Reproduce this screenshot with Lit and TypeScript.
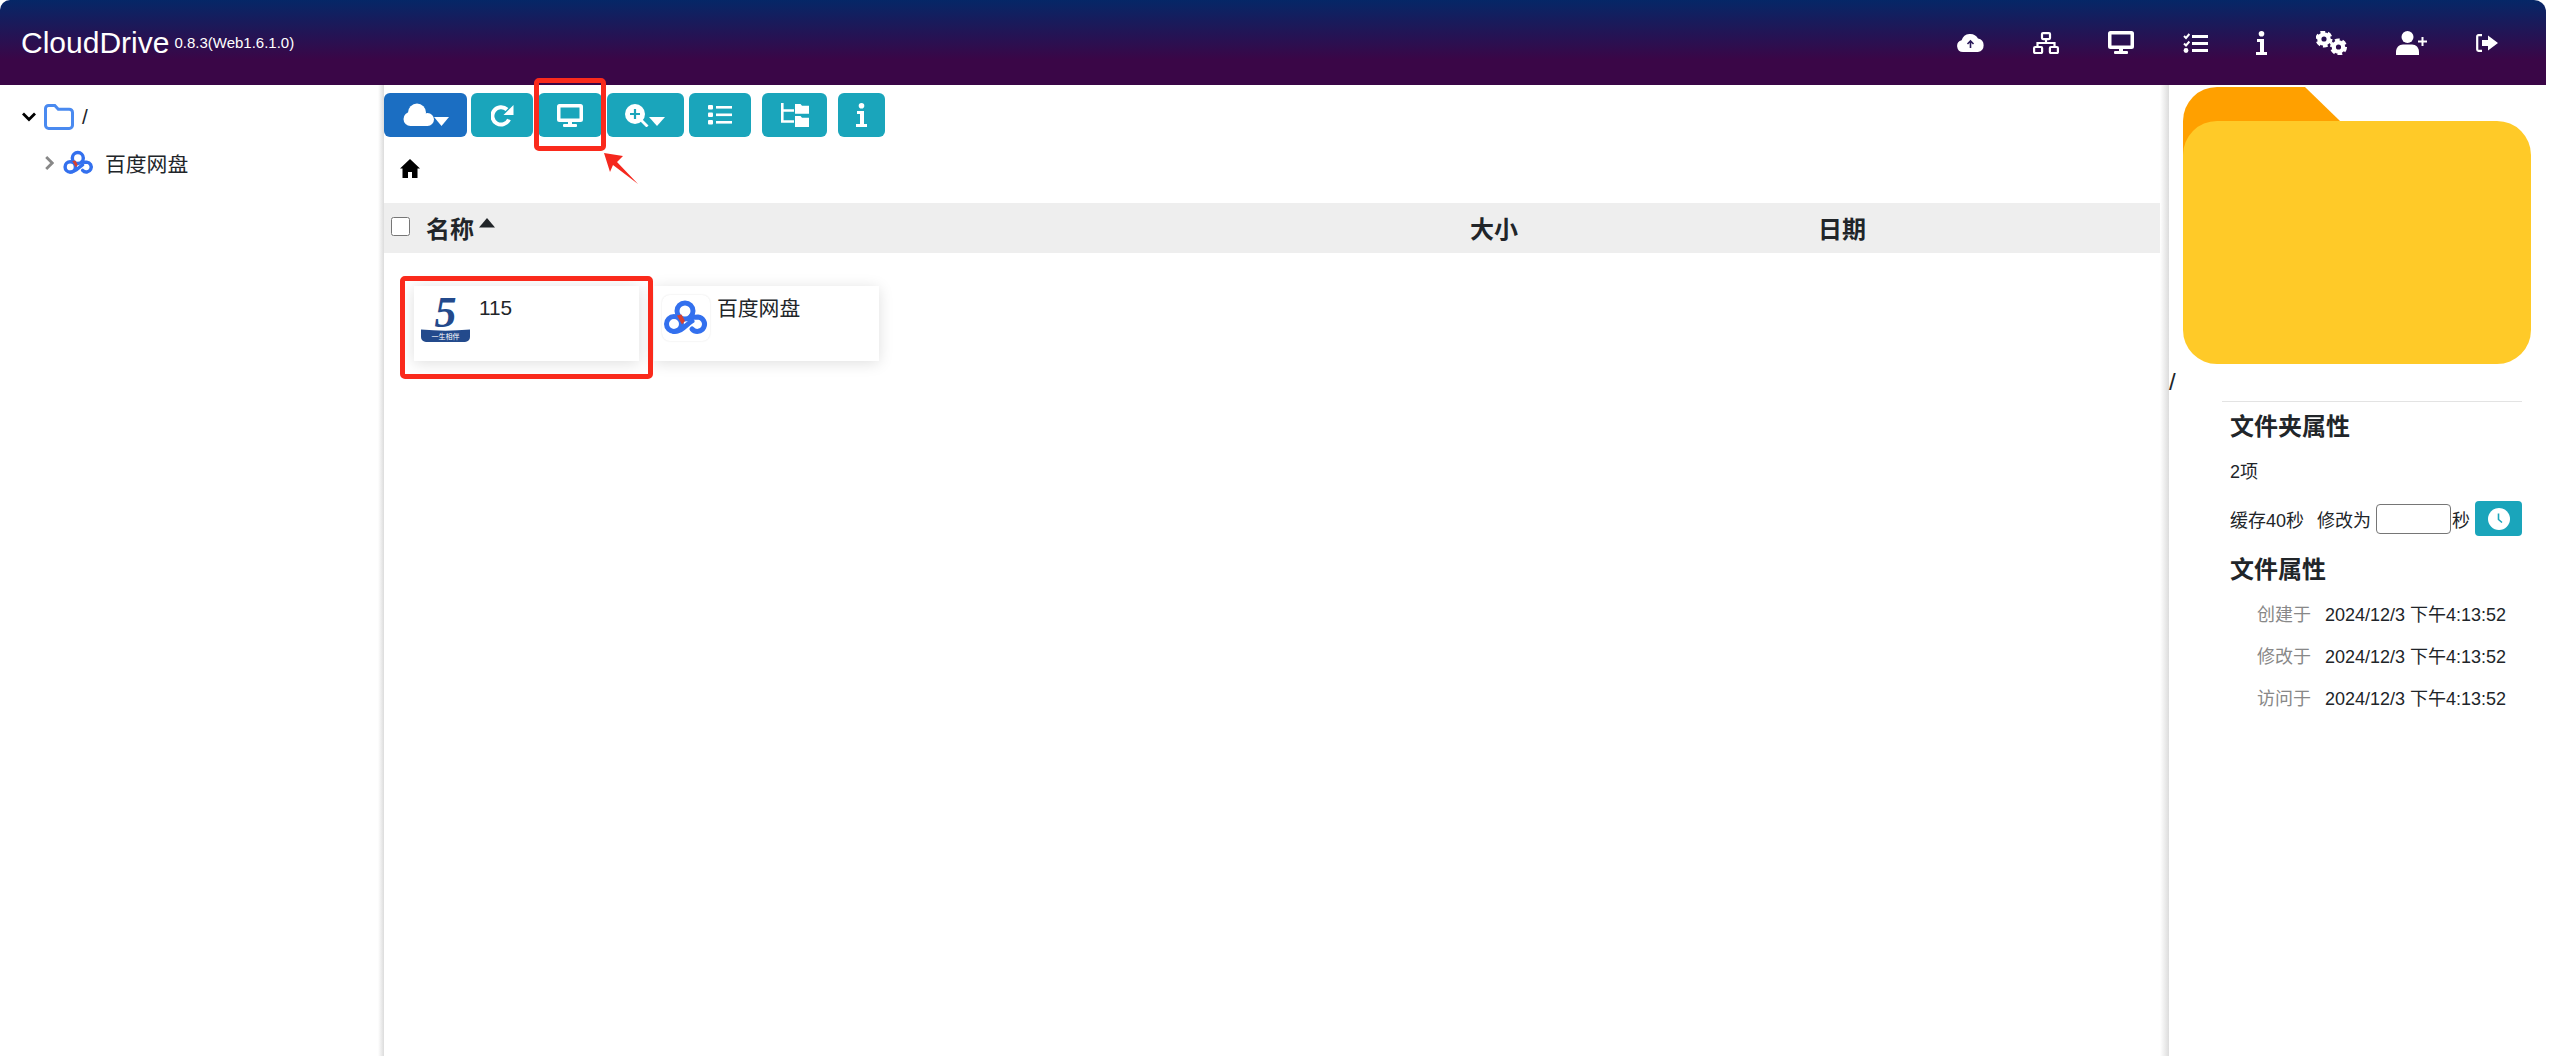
import { LitElement, html, css, svg } from "lit";
import { customElement } from "lit/decorators.js";

const W = "#fff";

const gear = (cx: number, cy: number, r: number) => svg`
  <circle cx=${cx} cy=${cy} r=${r * 0.62} fill="none" stroke=${W} stroke-width=${r * 0.56}/>
  <circle cx=${cx} cy=${cy} r=${r * 0.94} fill="none" stroke=${W} stroke-width=${r * 0.36} stroke-dasharray=${`${r * 0.62} ${r * 0.364}`}/>`;

const ic = {
  cloudUp: html`<svg width="27" height="19" viewBox="0 0 27 19"><path fill=${W} d="M6 19A6 6 0 0 1 4.6 7.2 9 9 0 0 1 21 5.6 6.8 6.8 0 0 1 21 19z"/><path fill="none" stroke="#2a1a5a" stroke-width="1.6" d="M13.5 15V8M10.5 11l3-3 3 3"/></svg>`,
  network: html`<svg width="26" height="22" viewBox="0 0 26 22" fill="none" stroke=${W} stroke-width="2.2"><rect x="9" y="1.100" width="8" height="6" rx="1"/><path d="M13 7v4M4.500 15v-4h17v4"/><rect x="1.100" y="15" width="8" height="6" rx="1"/><rect x="16.900" y="15" width="8" height="6" rx="1"/></svg>`,
  monitor: html`<svg width="26" height="23" viewBox="0 0 26 23"><path fill=${W} fill-rule="evenodd" d="M2.500 0h21a2.500 2.500 0 0 1 2.500 2.500v13a2.500 2.500 0 0 1-2.500 2.500h-21a2.500 2.500 0 0 1-2.500-2.500v-13a2.500 2.500 0 0 1 2.500-2.500zm1 3.500v11h19v-11z"/><rect x="11" y="18" width="4" height="3" fill=${W}/><rect x="6" y="20" width="14" height="3" rx="1" fill=${W}/></svg>`,
  tasks: html`<svg width="25" height="20" viewBox="0 0 25 20" fill="none" stroke=${W}><path stroke-width="2" d="M1 3l2 2 3.400-4M1 10.500l2 2 3.400-4"/><circle cx="3" cy="17.500" r="2.400" fill=${W} stroke="none"/><path stroke-width="3" d="M9 3.500h16M9 10.500h16M9 17.500h16"/></svg>`,
  info: html`<svg width="11" height="24" viewBox="0 0 11 24"><circle cx="5.500" cy="2.800" r="2.800" fill=${W}/><path fill=${W} d="M1 8h7v13h3v3H0v-3h4V11H1z"/></svg>`,
  cogs: html`<svg width="31" height="24" viewBox="0 0 31 24">${gear(8, 8, 7.6)}${gear(22.5, 16, 7.6)}</svg>`,
  userPlus: html`<svg width="31" height="24" viewBox="0 0 31 24"><circle cx="11.500" cy="6" r="6" fill=${W}/><path fill=${W} d="M0 24v-3c0-4.500 3-7.500 7-7.500h9c4 0 7 3 7 7.500v3z"/><path stroke=${W} stroke-width="2" d="M22 10.500h9M26.500 6v9"/></svg>`,
  signOut: html`<svg width="22" height="18" viewBox="0 0 22 18"><path fill="none" stroke=${W} stroke-width="2.200" d="M6 1.200H2.500A1.300 1.300 0 0 0 1.200 2.500v13a1.300 1.300 0 0 0 1.300 1.300H6"/><path fill=${W} d="M6 6h6V1.500L22 9l-10 7.500V12H6z"/></svg>`,
  cloudDown: html`<svg width="46" height="24" viewBox="0 0 46 24"><g fill=${W}><circle cx="7.500" cy="16" r="7"/><circle cx="14" cy="9.500" r="9"/><circle cx="24.500" cy="16.500" r="6.500"/><rect x="7" y="14" width="18" height="9"/></g><path fill=${W} d="M31 14h15l-7.500 9z"/></svg>`,
  refresh: html`<svg width="23" height="23" viewBox="0 0 23 23"><path fill="none" stroke=${W} stroke-width="4" d="M18 15.500A8.700 8.700 0 1 1 16 5.500"/><path fill=${W} d="M22.500 1v10h-10z"/></svg>`,
  zoom: html`<svg width="41" height="23" viewBox="0 0 41 23"><circle cx="10" cy="10" r="10" fill=${W}/><path stroke="#1aa5bb" stroke-width="2.200" d="M10 5v10M5 10h10"/><path stroke=${W} stroke-width="2.800" d="M16 16l6.500 6.500"/><path fill=${W} d="M24 13h16l-8 9z"/></svg>`,
  list: html`<svg width="24" height="20" viewBox="0 0 24 20"><g fill=${W}><rect x="0" y="0" width="5" height="4.500" rx="1"/><rect x="0" y="7.500" width="5" height="4.500" rx="1"/><rect x="0" y="15" width="5" height="4.500" rx="1"/><rect x="8" y="1" width="16" height="2.600"/><rect x="8" y="8.500" width="16" height="2.600"/><rect x="8" y="16" width="16" height="2.600"/></g></svg>`,
  tree: html`<svg width="28" height="24" viewBox="0 0 28 24"><path fill="none" stroke=${W} stroke-width="2.600" d="M1.300 0v18.500H13M1.300 7.500H13"/><path fill=${W} d="M14 1h5.500l1.500 1.800h7v8H14zM14 13h5.500l1.500 1.800h7V24H14z"/></svg>`,
  home: html`<svg width="20" height="19" viewBox="0 0 20 19"><path d="M10 0L0 9.500h2.500V19h5.500v-6h4v6h5.500V9.500H20z"/></svg>`,
  clock: html`<svg width="22" height="22" viewBox="0 0 22 22"><circle cx="11" cy="11" r="11" fill=${W}/><path fill="none" stroke="#1aa5bb" stroke-width="1.600" d="M10.500 5.500v6l3.500 3"/></svg>`,
};

const baidu = (size: number) => html`<svg width=${size} height=${size * 46 / 48} viewBox="3 3 48 46">
  <g fill="none" stroke="#3370ee" stroke-width="5" stroke-linecap="round">
    <circle cx="26" cy="19" r="8"/>
    <circle cx="15" cy="32" r="7.500"/>
    <path d="M32 24.500c2 1 4 .8 7 .5a7.200 7.200 0 1 1-6 12"/>
    <path d="M15 39.500c8 0 11-6 18-10.500"/>
  </g>
  <path fill="#d8402f" d="M18 23.500l4.500-1 3.500 6.500-3 3.500z"/>
</svg>`;

const logo115 = html`<svg class="logo" width="49" height="45" viewBox="0 0 49 45">
  <text class="five" x="24.500" y="30" text-anchor="middle">5</text>
  <path fill="#234a8c" d="M0 32.500c16 1.500 33 1.500 49 0V40a5 5 0 0 1-5 5H5a5 5 0 0 1-5-5z"/>
  <text class="motto" x="24.500" y="42" text-anchor="middle">一生相伴</text>
</svg>`;

const navItems = [
  { w: 76, i: ic.cloudUp },
  { w: 76, i: ic.network },
  { w: 74, i: ic.monitor },
  { w: 74, i: ic.tasks },
  { w: 58, i: ic.info },
  { w: 82, i: ic.cogs },
  { w: 78, i: ic.userPlus },
  { w: 74, i: ic.signOut },
];

const toolButtons = [
  { w: 83, m: 0, i: ic.cloudDown, primary: true },
  { w: 62, m: 4, i: ic.refresh },
  { w: 64, m: 5, i: ic.monitor },
  { w: 77, m: 5, i: ic.zoom },
  { w: 62, m: 5, i: ic.list },
  { w: 65, m: 11, i: ic.tree },
  { w: 47, m: 11, i: ic.info },
];

const dates = ["创建于", "修改于", "访问于"];

@customElement("app-root")
export class AppRoot extends LitElement {
  static styles = css`
    :host {
      display: block;
      width: 2550px;
      height: 1056px;
      overflow: hidden;
      background: #fff;
      color: #212529;
      font-family: "Liberation Sans", "Noto Sans CJK SC", sans-serif;
      font-size: 18px;
    }
    * { box-sizing: border-box; }
    .top {
      width: 2546px;
      height: 85px;
      display: flex;
      align-items: center;
      padding: 0 22px 0 21px;
      border-radius: 10px 12px 0 0;
      background: linear-gradient(180deg, #052767 0%, #3a0647 70%);
      color: #fff;
    }
    .brand { font-size: 30px; line-height: 1; }
    .ver { font-size: 15px; margin-left: 5px; }
    .nav { margin-left: auto; display: flex; }
    .nav-item { display: flex; justify-content: center; align-items: center; height: 30px; }
    .body { display: flex; width: 2546px; height: 971px; }
    .tree { width: 378px; flex: none; padding: 13px 0 0 22px; font-size: 20.8px; }
    .tree-row { display: flex; align-items: center; }
    .root-row { height: 38px; }
    .child-row { height: 38px; margin-top: 8px; padding-left: 23px; }
    .root-row .slash { margin-left: 8px; }
    .root-row svg:first-child { margin-right: 8px; }
    .child-row .chev { margin-right: 8px; }
    .child-row .name { margin-left: 10px; }
    .gutter { flex: none; background: linear-gradient(90deg, #fff, #dcdcdc); }
    .g-left { width: 6px; }
    .g-right { width: 9px; }
    .main { flex: none; width: 1776px; position: relative; }
    .toolbar { display: flex; padding-top: 8px; }
    .btn {
      height: 44px;
      flex: none;
      display: flex;
      align-items: center;
      justify-content: center;
      border-radius: 6px;
      background: #1aa5bb;
      border: 0;
      padding: 0;
    }
    .btn.primary { background: #1b6ec2; }
    .crumbs { height: 66px; padding: 22px 0 0 16px; }
    .crumbs svg { display: block; }
    .thead {
      height: 50px;
      background: #eee;
      display: grid;
      grid-template-columns: 35px 1044px 348px 1fr;
      align-items: center;
      padding: 0 0 2px 7px;
      font-size: 24px;
      font-weight: 700;
    }
    .cb { width: 19px; height: 19px; margin: 0 0 1px; border: 1px solid #767676; border-radius: 3px; background: #fff; }
    .sort { display: flex; align-items: center; }
    .caret { margin: 0 0 9px 5px; }
    .cards { display: flex; gap: 15px; padding: 33px 0 0 30px; }
    .card {
      width: 225px;
      height: 75px;
      display: flex;
      box-shadow: 0 2px 14px rgba(0, 0, 0, 0.13);
      font-size: 20.8px;
      background: #fff;
    }
    .card .t { line-height: 24px; }
    .c1 { padding: 10px 0 0 7px; gap: 9px; }
    .c1 .logo { margin-top: 1px; }
    .c2 { padding: 9px 0 0 8px; gap: 7px; }
    .c2 .t { padding-top: 2px; }
    .tile { width: 48px; height: 46px; border-radius: 8px; box-shadow: 0 0 2px rgba(0,0,0,.12); display: flex; align-items: center; justify-content: center; }
    .logo { overflow: visible; }
    .five { font-family: "Liberation Serif", serif; font-size: 44px; font-weight: 700; font-style: italic; fill: #234a8c; }
    .motto { font-family: "Noto Sans CJK SC", sans-serif; font-size: 7px; fill: #fff; }
    .mark { position: absolute; border: 5px solid #fa2a1c; border-radius: 5px; }
    .m-btn { left: 150px; top: -7px; width: 72px; height: 73px; }
    .m-card { left: 16px; top: 191px; width: 253px; height: 103px; }
    .arrow { position: absolute; left: 218px; top: 67px; }
    .panel { flex: 1; min-width: 0; }
    .folder { display: block; margin: 2px 0 0 14px; }
    .path { height: 35px; line-height: 36px; font-size: 24px; }
    .hr { height: 1px; margin: 2px 0 0 53px; width: 300px; background: #e3e3e3; }
    .props { padding-left: 61px; }
    h4 { margin: 0; font-size: 24px; line-height: 36px; font-weight: 700; }
    .h1 { margin-top: 7px; }
    .count { margin-top: 13px; line-height: 28px; }
    .cache { display: flex; align-items: center; height: 35px; margin-top: 15px; }
    .cache .edit { margin-left: 13px; }
    .cache input { width: 75px; height: 30px; margin: 0 1px 0 5px; padding: 0; border: 1px solid #767676; border-radius: 4px; background: #fff; }
    .cache .go { width: 47px; height: 35px; margin-left: 5px; border-radius: 4px; }
    .h2 { margin-top: 16px; }
    .dates { margin-top: 4px; padding-left: 27px; }
    .date { display: grid; grid-template-columns: 68px auto; height: 42px; align-items: center; justify-content: start; }
    .date .k { color: #888; }
  `;

  render() {
    return html`
      <header class="top">
        <span class="brand">CloudDrive</span><span class="ver">0.8.3(Web1.6.1.0)</span>
        <nav class="nav">
          ${navItems.map((n) => html`<a class="nav-item" style="width:${n.w}px">${n.i}</a>`)}
        </nav>
      </header>
      <div class="body">
        <aside class="tree">
          <div class="tree-row root-row">
            <svg width="14" height="10" viewBox="0 0 14 10"><path fill="none" stroke="#000" stroke-width="2.800" d="M1 1.500l6 6 6-6"/></svg>
            <svg width="30" height="26" viewBox="0 0 30 26"><path fill="none" stroke="#4a8af0" stroke-width="3" d="M1.500 4.500a3 3 0 0 1 3-3h6.300l3.500 3.700h11a3.200 3.200 0 0 1 3.200 3.200V21.300a3.200 3.200 0 0 1-3.200 3.200H4.700a3.200 3.200 0 0 1-3.200-3.200z"/></svg>
            <span class="slash">/</span>
          </div>
          <div class="tree-row child-row">
            <svg class="chev" width="9" height="14" viewBox="0 0 9 14"><path fill="none" stroke="#888" stroke-width="2.800" d="M1.200 1l6 6-6 6"/></svg>
            ${baidu(33)}
            <span class="name">百度网盘</span>
          </div>
        </aside>
        <div class="gutter g-left"></div>
        <main class="main">
          <div class="toolbar">
            ${toolButtons.map(
              (b) => html`<button class="btn ${b.primary ? "primary" : ""}" style="width:${b.w}px;margin-left:${b.m}px">${b.i}</button>`
            )}
          </div>
          <div class="crumbs">${ic.home}</div>
          <div class="thead">
            <input class="cb" type="checkbox" />
            <div class="sort">名称<svg class="caret" width="16" height="10" viewBox="0 0 16 10"><path fill="#212529" d="M8 0l8 9.500H0z"/></svg></div>
            <div>大小</div>
            <div>日期</div>
          </div>
          <div class="cards">
            <div class="card c1">${logo115}<span class="t">115</span></div>
            <div class="card c2"><span class="tile">${baidu(48)}</span><span class="t">百度网盘</span></div>
          </div>
          <div class="mark m-btn"></div>
          <div class="mark m-card"></div>
          <svg class="arrow" width="38" height="34" viewBox="0 0 38 34"><path fill="#f5281e" d="M2 1l19 3-6 6 21 22-25-19-3 7z"/></svg>
        </main>
        <div class="gutter g-right"></div>
        <aside class="panel">
          <svg class="folder" width="348" height="277" viewBox="0 0 348 277">
            <path fill="#ffa000" d="M34 0H122L157 34V120H0V34A34 34 0 0 1 34 0z"/>
            <rect y="34" width="348" height="243" rx="34" fill="#ffca28"/>
          </svg>
          <div class="path">/</div>
          <div class="hr"></div>
          <div class="props">
            <h4 class="h1">文件夹属性</h4>
            <div class="count">2项</div>
            <div class="cache">
              <span>缓存40秒</span><span class="edit">修改为</span><input type="text" /><span>秒</span>
              <button class="btn go">${ic.clock}</button>
            </div>
            <h4 class="h2">文件属性</h4>
            <div class="dates">
              ${dates.map(
                (d) => html`<div class="date"><span class="k">${d}</span><span>2024/12/3 下午4:13:52</span></div>`
              )}
            </div>
          </div>
        </aside>
      </div>
    `;
  }
}
